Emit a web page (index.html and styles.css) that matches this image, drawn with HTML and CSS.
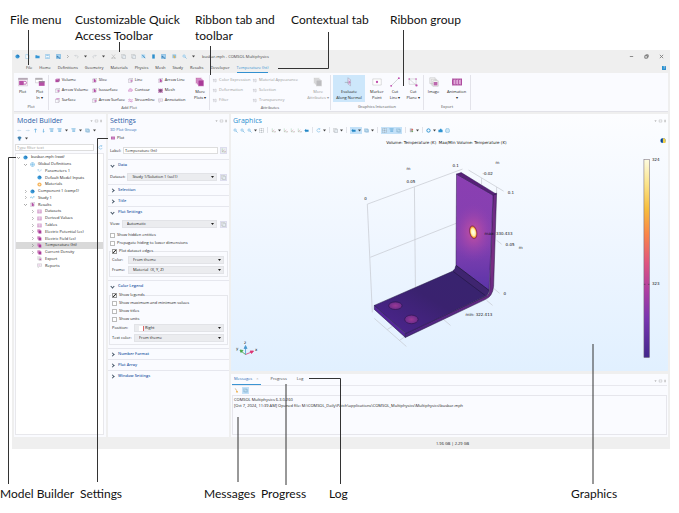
FILE: index.html
```html
<!DOCTYPE html>
<html lang="en">
<head>
<meta charset="utf-8">
<title>COMSOL Multiphysics desktop</title>
<link rel="stylesheet" href="styles.css">
</head>
<body>
<svg class="defs" aria-hidden="true">
  <defs>
    <symbol id="cube" viewBox="0 0 12 12"><path d="M1 3h7v7H1z" fill="#b0489f"/><path d="M1 3l3-2h7L8 3z" fill="#d48ac9"/><path d="M8 3l3-2v7l-3 2z" fill="#8a2f7d"/></symbol>
    <symbol id="slice" viewBox="0 0 12 12"><path d="M1 3h7v8H1zM1 3l3-2h7v8l-3 2M8 3l3-2" fill="none" stroke="#b9a9bd"/><path d="M4 3l3-1v7l-3 1zM7 5l2-1v5l-2 1z" fill="#b64fa6"/></symbol>
    <symbol id="frame" viewBox="0 0 12 12"><path d="M1 3h7v8H1zM1 3l3-2h7v8l-3 2M8 3l3-2" fill="none" stroke="#aaa2b0"/><path d="M4 7h6M8 5l2 2-2 2" fill="none" stroke="#c04fae" stroke-width="1.4"/></symbol>
    <symbol id="surf" viewBox="0 0 12 12"><path d="M1 3h7v8H1zM8 3l3-2v8l-3 2" fill="none" stroke="#aaa2b0"/><path d="M1 3l3-2h7L8 3z" fill="#c04fae"/></symbol>
    <symbol id="contour" viewBox="0 0 12 12"><path d="M2 9C0 4 4 1 7 2s5 3 2 6M5 9c-2-3 0-5 2-4s1 3 0 4" fill="none" stroke="#c04fae" stroke-width="1.3"/></symbol>
    <symbol id="mesh" viewBox="0 0 12 12"><path d="M1 2h10v9H1z" fill="#c56bb7"/><path d="M1 2l10 9M11 2L1 11M6 2v9M1 6h10" stroke="#574459" stroke-width="1"/></symbol>
    <symbol id="stream" viewBox="0 0 12 12"><path d="M1 4c3-4 5 4 10 0M1 8c3-4 5 4 10 0" fill="none" stroke="#c04fae" stroke-width="1.4"/></symbol>
    <symbol id="note" viewBox="0 0 12 12"><path d="M1 2h10v6H6l-3 3V8H1z" fill="none" stroke="#aaa2b0"/><path d="M3 5h5" stroke="#c04fae"/></symbol>
    <symbol id="fade" viewBox="0 0 12 12"><path d="M2 4h4M4 2v8M7 3h3v6H7z" fill="none" stroke="#bdbdc4" stroke-width="1.2"/></symbol>
    <symbol id="plot" viewBox="0 0 26 22"><path d="M1 1h24v20H1z" fill="#f7eef6" stroke="#b9a8b8"/><path d="M1 1h24v4H1z" fill="#ab9eac"/><path d="M3 8h12v11H3z" fill="#b64fa6"/><circle cx="18" cy="13" r="4" fill="#fff" stroke="#b64fa6" stroke-width="2"/></symbol>
    <symbol id="plotin" viewBox="0 0 26 22"><path d="M1 1h18v12H1z" fill="#fff" stroke="#a7a3a9"/><path d="M1 1h18v4H1z" fill="#aaa6ac"/><path d="M10 9h15v12H10z" fill="#b64fa6"/><path d="M10 9h15v3H10z" fill="#8e8591"/></symbol>
    <symbol id="more" viewBox="0 0 26 26"><path d="M2 2h15v15H2z" fill="#b9509f" stroke="#fff"/><path d="M5 5h15v15H5z" fill="#c05bae" stroke="#fff"/><path d="M8 8h15v16H8z" fill="#a93a98" stroke="#fff"/></symbol>
    <symbol id="moregray" viewBox="0 0 26 26"><path d="M2 2h15v15H2z" fill="#c8c8ca" stroke="#fff"/><path d="M5 5h15v15H5z" fill="#c8c8ca" stroke="#fff"/><path d="M8 8h15v16H8z" fill="#bcbcbf" stroke="#fff"/></symbol>
    <symbol id="eval" viewBox="0 0 26 26"><path d="M10 2l7 5v16l-7-5z" fill="#e6dcef" stroke="#8f8ba0"/><path d="M2 14h12" stroke="#777"/><path d="M12 10l4 4-4 3" stroke="#c04fae" fill="none" stroke-width="2"/></symbol>
    <symbol id="marker" viewBox="0 0 26 26"><path d="M2 5h22v16H2z" fill="#fff" stroke="#aaa"/><circle cx="13" cy="13" r="3" fill="#c04fae"/></symbol>
    <symbol id="cutline" viewBox="0 0 26 26"><path d="M3 23L23 3" stroke="#99959d"/><circle cx="3" cy="23" r="2.5" fill="#c04fae"/><circle cx="23" cy="3" r="2.5" fill="#c04fae"/></symbol>
    <symbol id="cutplane" viewBox="0 0 26 26"><path d="M3 5h18v14H3zM3 5l19 17" fill="none" stroke="#aaa"/><circle cx="3" cy="5" r="2" fill="#c04fae"/><circle cx="21" cy="5" r="2" fill="#c04fae"/><circle cx="22" cy="22" r="3" fill="#c04fae"/></symbol>
    <symbol id="image" viewBox="0 0 26 26"><path d="M2 2h14v15H2zM6 6h14v15H6z" fill="#f5f5f5" stroke="#aaa"/><path d="M10 10h14v14H10z" fill="#fff" stroke="#999"/><path d="M12 13h10v9H12z" fill="#bb68ad"/></symbol>
    <symbol id="film" viewBox="0 0 26 18"><path d="M0 0h26v18H0z" fill="#ad4b9e"/><path d="M4 4h5v10H4zM11 4h5v10h-5zM18 4h5v10h-5z" fill="#e0a9d9"/><path d="M1 2h24M1 16h24" stroke="#f7e5f4" stroke-dasharray="2 2"/></symbol>
    <symbol id="dot" viewBox="0 0 12 12"><circle cx="6" cy="6" r="5" fill="#3d9bd8"/><path d="M6 1v5h5" fill="#1c6aae"/></symbol>
    <symbol id="globe" viewBox="0 0 12 12"><circle cx="6" cy="6" r="5" fill="#d6edfb" stroke="#67b4e2"/><path d="M6 1v10M1 6h10" stroke="#67b4e2"/></symbol>
    <symbol id="pi" viewBox="0 0 12 12"><path d="M1 4h4M3 4v4M5 8c5 0 5-4 5-5" fill="none" stroke="#5faadc"/></symbol>
    <symbol id="mat" viewBox="0 0 12 12"><circle cx="6" cy="6" r="5" fill="#f6b45d"/><circle cx="6" cy="6" r="2" fill="#fff0cf"/></symbol>
    <symbol id="study" viewBox="0 0 12 12"><path d="M0 8l3-4 3 4 3-5 3 3" fill="none" stroke="#61b3e0" stroke-width="1.4"/></symbol>
    <symbol id="grid" viewBox="0 0 12 12"><path d="M1 2h10v8H1zM1 5h10M1 8h10M4 2v8M8 2v8" fill="none" stroke="#c57ab9"/></symbol>
    <symbol id="folder" viewBox="0 0 12 12"><path d="M1 3h4l1 1h5v6H1z" fill="#3596d6"/></symbol>
    <symbol id="doc" viewBox="0 0 12 12"><path d="M2 1h5l3 3v7H2z" fill="#fff" stroke="#67aede"/><path d="M7 1v3h3" fill="none" stroke="#67aede"/></symbol>
    <symbol id="save" viewBox="0 0 12 12"><path d="M1 1h10v10H1z" fill="#eef7fd" stroke="#60aadc"/><path d="M3 1h6v4H3zM3 8h6v3H3z" fill="#9ccbea"/></symbol>
    <symbol id="saveas" viewBox="0 0 12 12"><path d="M1 1h10v10H1z" fill="#a8d2ef" stroke="#4799d0"/><path d="M3 5l7 6M3 5v4" stroke="#206fac" stroke-width="2"/></symbol>
    <symbol id="undo" viewBox="0 0 12 12"><path d="M4 2L2 4l2 2M2 4h5c4 0 4 5 0 6" fill="none" stroke="#b4b8c0"/></symbol>
    <symbol id="redo" viewBox="0 0 12 12"><path d="M8 2l2 2-2 2M10 4H5c-4 0-4 5 0 6" fill="none" stroke="#b4b8c0"/></symbol>
    <symbol id="cut" viewBox="0 0 12 12"><path d="M2 1l7 9M10 1L3 10" stroke="#aaa"/><circle cx="3" cy="10" r="1.5" fill="none" stroke="#aaa"/><circle cx="9" cy="10" r="1.5" fill="none" stroke="#aaa"/></symbol>
    <symbol id="copy" viewBox="0 0 12 12"><path d="M1 1h7v8H1z" fill="#fff" stroke="#a6a9ad"/><path d="M4 3h7v8H4z" fill="#e6edf2" stroke="#a0a6ac"/></symbol>
    <symbol id="trash" viewBox="0 0 12 12"><path d="M3 1h6v10H3z" fill="#2d8fcd"/></symbol>
    <symbol id="pen" viewBox="0 0 12 12"><path d="M1 1h9v9H1z" fill="#b4dbf3"/><path d="M3 2l7 8" stroke="#3986bc" stroke-width="2"/></symbol>
    <symbol id="peny" viewBox="0 0 12 12"><path d="M1 1h9v9H1z" fill="#8cc4e9"/><path d="M3 2l6 5-4 4z" fill="#eab14c"/></symbol>
    <symbol id="broom" viewBox="0 0 12 12"><path d="M3 1l3 5" stroke="#b98a4a" stroke-width="1.4"/><path d="M5 6l4 1 1 4H5z" fill="#f0b659"/></symbol>
    <symbol id="zoomi" viewBox="0 0 12 12"><circle cx="5" cy="5" r="3" fill="#d4ebf9" stroke="#6ab0dc"/><path d="M7 7l4 4" stroke="#6ab0dc" stroke-width="1.6"/></symbol>
    <symbol id="extents" viewBox="0 0 12 12"><path d="M1 1h10v10H1zM6 1v10M1 6h10" fill="none" stroke="#91989e" stroke-dasharray="3 1"/></symbol>
    <symbol id="axes" viewBox="0 0 12 12"><path d="M3 1v8h8" fill="none" stroke="#8bbf94"/><path d="M3 9l5-5M9 7l2 2-2 2" fill="none" stroke="#d97e9b"/></symbol>
    <symbol id="rotate" viewBox="0 0 12 12"><path d="M9 3a4 4 0 1 0 1 4M9 0v3H6" fill="none" stroke="#67b2e0" stroke-width="1.2"/></symbol>
    <symbol id="tag" viewBox="0 0 12 12"><path d="M1 6l4-4v2h6v5H5v2z" fill="#2387c6"/></symbol>
    <symbol id="view" viewBox="0 0 12 12"><path d="M1 2h8v7H1zM4 4h7v6H4z" fill="#c9e4f4" stroke="#79aace"/></symbol>
    <symbol id="pal" viewBox="0 0 12 12"><path d="M2 1h6v9H2z" fill="#b8b6bd"/><circle cx="8" cy="4" r="2" fill="#de6459"/><circle cx="8" cy="8" r="2" fill="#6aa864"/></symbol>
    <symbol id="ring" viewBox="0 0 12 12"><circle cx="6" cy="6" r="4" fill="none" stroke="#3295d1" stroke-width="2.4"/></symbol>
    <symbol id="cam" viewBox="0 0 12 12"><path d="M1 4h3l1-2h3l1 2h2v6H1z" fill="#2e93d2"/></symbol>
    <symbol id="eye" viewBox="0 0 12 12"><path d="M1 5c0-5 10-5 10 0L8 7v4H4V7z" fill="#3c7fae"/></symbol>
    <symbol id="print" viewBox="0 0 12 12"><path d="M3 1h6v3h2v5H9v2H3V9H1V4h2z" fill="#cfe7f6" stroke="#65aeda"/></symbol>
    <symbol id="left" viewBox="0 0 12 12"><path d="M10 6H2M4 4L2 6l2 2" fill="none" stroke="#9bbfda"/></symbol>
    <symbol id="right" viewBox="0 0 12 12"><path d="M2 6h8M8 4l2 2-2 2" fill="none" stroke="#9bbfda"/></symbol>
    <symbol id="up" viewBox="0 0 12 12"><path d="M6 11V2M3 5l3-3 3 3" fill="none" stroke="#3c9bd6" stroke-width="1.3"/></symbol>
    <symbol id="down" viewBox="0 0 12 12"><path d="M6 2v8M4 8l2 2 2-2" fill="none" stroke="#3c9bd6" stroke-width="1.3"/></symbol>
    <symbol id="list" viewBox="0 0 12 12"><path d="M1 2h10M3 5h7M3 8h7" stroke="#4ba0d5" stroke-width="1.6"/></symbol>
    <symbol id="caret" viewBox="0 0 6 6"><path d="M0 1h6L3 5z" fill="#444"/></symbol>
    <symbol id="closed" viewBox="0 0 6 6"><path d="M2 0l3 3-3 3" fill="none" stroke="#777"/></symbol>
    <symbol id="open" viewBox="0 0 6 6"><path d="M0 2l3 3 3-3" fill="none" stroke="#555"/></symbol>
    <symbol id="panelctl" viewBox="0 0 30 8"><path d="M1 3h5L3.500 6z" fill="#999"/><path d="M12 1.500h6v5h-6z" fill="none" stroke="#aaa"/><path d="M24 1h3v6h-3z" fill="#bbb"/></symbol>
  </defs>
</svg>

<div class="figure">
  <div class="labels top">
    <span>File menu</span><span>Customizable Quick<br>Access Toolbar</span><span>Ribbon tab and<br>toolbar</span><span>Contextual tab</span><span>Ribbon group</span>
  </div>

  <div class="window">
    <header class="titlebar">
      <div class="quick">
        <svg><use href="#dot"/></svg><svg><use href="#doc"/></svg><svg><use href="#folder"/></svg><svg><use href="#save"/></svg><svg><use href="#saveas"/></svg><svg class="tiny"><use href="#closed"/></svg><svg><use href="#undo"/></svg><svg class="tiny"><use href="#caret"/></svg><svg><use href="#redo"/></svg><svg class="tiny"><use href="#caret"/></svg><svg><use href="#cut"/></svg><svg><use href="#copy"/></svg><svg><use href="#copy"/></svg><svg><use href="#pen"/></svg><svg><use href="#trash"/></svg><svg><use href="#saveas"/></svg><svg><use href="#peny"/></svg><svg><use href="#zoomi"/></svg><svg class="tiny"><use href="#caret"/></svg>
      </div>
      <span class="title">busbar.mph - COMSOL Multiphysics</span>
      <div class="winctl">
        <svg viewBox="0 0 6 6"><path d="M1 3h4" stroke="#777"/></svg>
        <svg viewBox="0 0 6 6"><path d="M1 2h3v3H1zM2 1h3v3" fill="none" stroke="#666" stroke-width="1"/></svg>
        <svg viewBox="0 0 6 6"><path d="M1 1l4 4M5 1L1 5" stroke="#777"/></svg>
      </div>
    </header>

    <nav class="tabs">
      <a href="#">File</a><a href="#">Home</a><a href="#">Definitions</a><a href="#">Geometry</a><a href="#">Materials</a><a href="#">Physics</a><a href="#">Mesh</a><a href="#">Study</a><a href="#">Results</a><a href="#">Developer</a><a href="#" class="active">Temperature (ht)</a>
      <span class="help">?</span>
    </nav>

    <div class="ribbon">
      <section class="group g-plot">
        <div class="tools">
          <button class="big"><svg><use href="#plot"/></svg>Plot</button>
          <button class="big"><svg><use href="#plotin"/></svg>Plot<br>In ▾</button>
        </div>
        <h3>Plot</h3>
      </section>
      <section class="group g-add">
        <div class="tools">
          <div class="small add">
            <button><svg><use href="#cube"/></svg>Volume</button><button><svg><use href="#slice"/></svg>Slice</button><button><svg><use href="#frame"/></svg>Line</button><button><svg><use href="#slice"/></svg>Arrow Line</button>
            <button><svg><use href="#frame"/></svg>Arrow Volume</button><button><svg><use href="#slice"/></svg>Isosurface</button><button><svg><use href="#contour"/></svg>Contour</button><button><svg><use href="#mesh"/></svg>Mesh</button>
            <button><svg><use href="#surf"/></svg>Surface</button><button><svg><use href="#frame"/></svg>Arrow Surface</button><button><svg><use href="#stream"/></svg>Streamline</button><button><svg><use href="#note"/></svg>Annotation</button>
          </div>
          <button class="big"><svg><use href="#more"/></svg>More<br>Plots ▾</button>
        </div>
        <h3>Add Plot</h3>
      </section>
      <section class="group g-attr">
        <div class="tools">
          <div class="small attr">
            <button disabled><svg><use href="#fade"/></svg>Color Expression</button><button disabled><svg><use href="#fade"/></svg>Material Appearance</button>
            <button disabled><svg><use href="#fade"/></svg>Deformation</button><button disabled><svg><use href="#fade"/></svg>Selection</button>
            <button disabled><svg><use href="#fade"/></svg>Filter</button><button disabled><svg><use href="#fade"/></svg>Transparency</button>
          </div>
          <button class="big" disabled><svg><use href="#moregray"/></svg>More<br>Attributes ▾</button>
        </div>
        <h3>Attributes</h3>
      </section>
      <section class="group g-inter">
        <div class="tools">
          <button class="big on"><svg><use href="#eval"/></svg>Evaluate<br>Along Normal</button>
          <button class="big"><svg><use href="#marker"/></svg>Marker<br>Point</button>
          <button class="big"><svg><use href="#cutline"/></svg>Cut<br>Line ▾</button>
          <button class="big"><svg><use href="#cutplane"/></svg>Cut<br>Plane ▾</button>
        </div>
        <h3>Graphics Interaction</h3>
      </section>
      <section class="group g-exp">
        <div class="tools">
          <button class="big"><svg><use href="#image"/></svg>Image</button>
          <button class="big"><svg><use href="#film"/></svg>Animation<br>▾</button>
        </div>
        <h3>Export</h3>
      </section>
    </div>

    <main class="desk">
      <aside class="panel builder">
        <div class="head"><h2>Model Builder</h2><svg class="ctl"><use href="#panelctl"/></svg></div>
        <div class="bar">
          <svg><use href="#left"/></svg><svg><use href="#right"/></svg><svg><use href="#up"/></svg><svg><use href="#down"/></svg><svg><use href="#list"/></svg><svg><use href="#list"/></svg><svg class="tiny"><use href="#caret"/></svg><svg><use href="#list"/></svg><svg class="tiny"><use href="#caret"/></svg><svg><use href="#view"/></svg><svg class="tiny"><use href="#caret"/></svg>
        </div>
        <div class="bar"><svg><use href="#eye"/></svg><svg class="tiny"><use href="#caret"/></svg></div>
        <div class="filter"><input type="text" placeholder="Type filter text" aria-label="Filter"><svg><use href="#rotate"/></svg></div>
        <div class="treebox">
          <ul class="tree">
            <li><svg class="tw"><use href="#open"/></svg><svg><use href="#dot"/></svg><span>busbar.mph <i>(root)</i></span></li>
            <li class="l1"><svg class="tw"><use href="#open"/></svg><svg><use href="#globe"/></svg>Global Definitions</li>
            <li class="l2"><b></b><svg><use href="#pi"/></svg>Parameters 1</li>
            <li class="l2"><b></b><svg><use href="#dot"/></svg>Default Model Inputs</li>
            <li class="l2"><b></b><svg><use href="#mat"/></svg>Materials</li>
            <li class="l1"><svg class="tw"><use href="#closed"/></svg><svg><use href="#dot"/></svg><span>Component 1 <i>(comp1)</i></span></li>
            <li class="l1"><svg class="tw"><use href="#closed"/></svg><svg><use href="#study"/></svg>Study 1</li>
            <li class="l1"><svg class="tw"><use href="#open"/></svg><svg><use href="#slice"/></svg>Results</li>
            <li class="l2"><svg class="tw"><use href="#closed"/></svg><svg><use href="#grid"/></svg>Datasets</li>
            <li class="l2"><svg class="tw"><use href="#closed"/></svg><svg><use href="#grid"/></svg>Derived Values</li>
            <li class="l2"><svg class="tw"><use href="#closed"/></svg><svg><use href="#grid"/></svg>Tables</li>
            <li class="l2"><svg class="tw"><use href="#closed"/></svg><svg><use href="#more"/></svg>Electric Potential (ec)</li>
            <li class="l2"><svg class="tw"><use href="#closed"/></svg><svg><use href="#more"/></svg>Electric Field (ec)</li>
            <li class="l2 sel"><svg class="tw"><use href="#closed"/></svg><svg><use href="#more"/></svg>Temperature (ht)</li>
            <li class="l2"><svg class="tw"><use href="#closed"/></svg><svg><use href="#more"/></svg>Current Density</li>
            <li class="l2"><b></b><svg><use href="#image"/></svg>Export</li>
            <li class="l2"><b></b><svg><use href="#note"/></svg>Reports</li>
          </ul>
        </div>
      </aside>

      <section class="panel settings">
        <div class="head"><h2>Settings</h2><svg class="ctl"><use href="#panelctl"/></svg></div>
        <p class="sub">3D Plot Group</p>
        <button class="plotbtn"><svg><use href="#film"/></svg>Plot</button>
        <div class="field first"><label for="lab">Label:</label><input id="lab" type="text" value="Temperature (ht)"><button class="sq" aria-label="Go to plot"><svg><use href="#axes"/></svg></button></div>
        <section class="sec">
          <h3 class="o">Data</h3>
          <div class="field mid"><label for="ds">Dataset:</label><span class="sl"><select id="ds"><option>Study 1/Solution 1 (sol1)</option></select></span><button class="sq" aria-label="Go to source"><svg><use href="#copy"/></svg></button></div>
        </section>
        <section class="sec"><h3>Selection</h3></section>
        <section class="sec"><h3>Title</h3></section>
        <section class="sec">
          <h3 class="o">Plot Settings</h3>
          <div class="field mid"><label for="vw">View:</label><span class="sl"><select id="vw"><option>Automatic</option></select></span><button class="sq" aria-label="Go to view"><svg><use href="#copy"/></svg></button></div>
          <label class="ck"><input type="checkbox">Show hidden entities</label>
          <label class="ck"><input type="checkbox">Propagate hiding to lower dimensions</label>
          <fieldset>
            <legend><label class="ck"><input type="checkbox" checked>Plot dataset edges</label></legend>
            <div class="field in"><label for="co">Color:</label><span class="sl"><select id="co"><option>From theme</option></select></span></div>
            <div class="field in"><label for="fr">Frame:</label><span class="sl"><select id="fr"><option>Material &nbsp;(X, Y, Z)</option></select></span></div>
          </fieldset>
        </section>
        <section class="sec">
          <h3 class="o">Color Legend</h3>
          <fieldset>
            <legend><label class="ck"><input type="checkbox" checked>Show legends</label></legend>
            <label class="ck"><input type="checkbox">Show maximum and minimum values</label>
            <label class="ck"><input type="checkbox">Show titles</label>
            <label class="ck"><input type="checkbox">Show units</label>
            <div class="field in wide"><label for="po">Position:</label><span class="sl swatch"><select id="po"><option>Right</option></select></span></div>
            <div class="field in wide"><label for="tc">Text color:</label><span class="sl"><select id="tc"><option>From theme</option></select></span></div>
          </fieldset>
        </section>
        <section class="sec"><h3>Number Format</h3></section>
        <section class="sec"><h3>Plot Array</h3></section>
        <section class="sec"><h3>Window Settings</h3></section>
      </section>

      <div class="right">
        <section class="panel graphics">
          <div class="head"><h2>Graphics</h2><svg class="ctl"><use href="#panelctl"/></svg></div>
          <div class="bar gbar">
            <svg><use href="#zoomi"/></svg><svg><use href="#zoomi"/></svg><svg><use href="#zoomi"/></svg><svg class="tiny"><use href="#caret"/></svg><svg><use href="#extents"/></svg><i></i><svg><use href="#axes"/></svg><svg class="tiny"><use href="#caret"/></svg><svg><use href="#axes"/></svg><svg><use href="#axes"/></svg><svg><use href="#axes"/></svg><svg><use href="#tag"/></svg><i></i><svg><use href="#rotate"/></svg><svg class="tiny"><use href="#caret"/></svg><i></i><svg><use href="#copy"/></svg><svg class="tiny"><use href="#caret"/></svg><i></i><span class="hot"><svg><use href="#tag"/></svg><svg class="tiny"><use href="#caret"/></svg></span><svg><use href="#view"/></svg><svg class="tiny"><use href="#caret"/></svg><i></i><span class="hot"><svg><use href="#extents"/></svg><svg><use href="#list"/></svg><svg><use href="#view"/></svg></span><i></i><svg><use href="#pal"/></svg><svg class="tiny"><use href="#caret"/></svg><i></i><svg><use href="#ring"/></svg><svg class="tiny"><use href="#caret"/></svg><svg><use href="#cam"/></svg><svg><use href="#print"/></svg>
          </div>
          <svg class="scene" viewBox="232 134 436 236">
            <defs>
              <linearGradient id="cb" x1="0" y1="0" x2="0" y2="1"><stop offset="0" stop-color="#fdfbe0"/><stop offset=".12" stop-color="#fbe48c"/><stop offset=".25" stop-color="#f7bd3c"/><stop offset=".38" stop-color="#fa8449"/><stop offset=".52" stop-color="#e0557f"/><stop offset=".65" stop-color="#b23fa0"/><stop offset=".8" stop-color="#7a35b0"/><stop offset="1" stop-color="#42278c"/></linearGradient>
              <linearGradient id="face" x1="0" y1="0" x2="0" y2="1"><stop offset="0" stop-color="#8b3fb2"/><stop offset=".6" stop-color="#8340b0"/><stop offset="1" stop-color="#5a34a8"/></linearGradient>
              <linearGradient id="base" x1="0" y1="1" x2="1" y2="0"><stop offset="0" stop-color="#4f2593"/><stop offset=".5" stop-color="#3a226f"/><stop offset="1" stop-color="#38246f"/></linearGradient>
              <linearGradient id="side" x1="0" y1="0" x2="0" y2="1"><stop offset="0" stop-color="#6a2b86"/><stop offset=".5" stop-color="#7a2e83"/><stop offset="1" stop-color="#472480"/></linearGradient>
              <radialGradient id="glow"><stop offset="0" stop-color="#c9509f"/><stop offset=".5" stop-color="#ac48aa" stop-opacity=".5"/><stop offset="1" stop-color="#8b3fb2" stop-opacity="0"/></radialGradient>
              <radialGradient id="hotspot"><stop offset="0" stop-color="#fffff0"/><stop offset=".55" stop-color="#fff3b0"/><stop offset=".8" stop-color="#f7a13a"/><stop offset="1" stop-color="#a83b3b"/></radialGradient>
              <radialGradient id="hole"><stop offset="0" stop-color="#9a3a94"/><stop offset="1" stop-color="#6c2b8c"/></radialGradient>
              <clipPath id="plate"><path d="M457 174l36.500 21-4 95-33-25z"/></clipPath>
            </defs>
            <g class="wire">
              <path d="M368 204L463 169M368 204l5 108M415 187l1 100M371 257l86-34M469 170l35 21M482 178v6M497 187v7M497 240l5 4M494 288l6 5M487 300l6 5M444 319l7 6M375 318l32 28M388 329l5-3M400 340l6-4"/>
            </g>
            <path d="M375 305l31 28v4l-31-28z" fill="#55269a" stroke="#1f1540" stroke-width=".5"/>
            <path d="M406 333l80-37q4-2 4-6l3.500-96 3.500-1-3 93q-1 10-8 13l-80 38z" fill="url(#side)" stroke="#251443" stroke-width=".5"/>
            <path d="M375 305l78-34q3-2 3.500-6l33 25q-1 5-4 6l-79 37z" fill="url(#base)" stroke="#1f1540" stroke-width=".5"/>
            <path d="M457 174l36.500 21-4 95-33-25z" fill="url(#face)" stroke="#2c1650" stroke-width=".5"/>
            <ellipse cx="474" cy="232" rx="22" ry="30" fill="url(#glow)" clip-path="url(#plate)"/>
            <path d="M457 174l4.700-1.500 35 21.500-3.200 1z" fill="#572078" stroke="#2c1650" stroke-width=".5"/>
            <path d="M456.500 265l33 25q-1 5-4 5l-32-24q3-2 3-6z" fill="#3f2570"/>
            <path d="M456.500 265l33 25M453.500 271l32 24" stroke="#1b1235" stroke-width=".5" fill="none"/>
            <ellipse cx="396" cy="305.300" rx="6.700" ry="3.800" fill="url(#hole)" stroke="#2c1650" stroke-width=".7"/>
            <ellipse cx="412" cy="319" rx="6.700" ry="4.300" fill="url(#hole)" stroke="#2c1650" stroke-width=".7"/>
            <ellipse cx="473.700" cy="232" rx="3.600" ry="6.500" transform="rotate(-12 473.700 232)" fill="url(#hotspot)" stroke="#6b2450" stroke-width=".5"/>
            <g class="gl">
              <text x="387" y="144">Volume: Temperature (K)&#160; Max/Min Volume: Temperature (K)</text>
              <text x="365" y="200">0</text><text x="407" y="183">0.05</text><text x="407" y="170">m</text><text x="453" y="167">0.1</text>
              <text x="496" y="164">m</text><text x="483" y="175">-0.02</text><text x="508" y="194">0.1</text><text x="485" y="235">max: 330.433</text><text x="506" y="246">0.05</text><text x="519" y="249">m</text><text x="504" y="295">0</text><text x="466" y="316">min: 322.413</text>
              <text x="652" y="161">324</text><text x="652" y="285">323</text>
              <text x="245" y="344">z</text><text x="256" y="351">x</text><text x="237" y="350">y</text>
            </g>
            <rect x="644" y="159.500" width="5.500" height="197.500" fill="url(#cb)" stroke="#6d6272" stroke-width=".5"/>
            <path d="M644 284h1.500M648 284h1.500" stroke="#333" stroke-width=".5"/>
            <path d="M246.500 354v-7M245 348l1.500-3 1.500 3z" stroke="#4a9ad0" fill="#4a9ad0" stroke-width=".8"/>
            <path d="M246.500 354l6-2.500M251 350.500l3.500 0-2 2.500z" stroke="#dd3373" fill="#dd3373" stroke-width=".8"/>
            <path d="M246.500 354l-4-3M241 349.500l3 .5-2 2z" stroke="#41a541" fill="#41a541" stroke-width=".8"/>
            <circle cx="663" cy="140.500" r="2.600" fill="#2f6fc0"/><path d="M663 138v5h2.500v-4z" fill="#f0cf4a"/><path d="M661 139h1.500v3H661z" fill="#14427f"/>
          </svg>
        </section>
        <section class="panel messages">
          <div class="mtabs">
            <button class="cur">Messages <span>×</span></button><button>Progress</button><button>Log</button><svg class="ctl"><use href="#panelctl"/></svg>
          </div>
          <div class="bar mbar"><svg><use href="#broom"/></svg><span class="hot"><svg><use href="#view"/></svg></span></div>
          <div class="log">COMSOL Multiphysics 6.3.0.260<br>[Oct 7, 2024, 11:39 AM] Opened file: M:\COMSOL_Daily\Patch\applications\COMSOL_Multiphysics\Multiphysics\busbar.mph</div>
        </section>
      </div>
    </main>
    <footer class="status">1.96 GB | 2.29 GB</footer>
  </div>

  <div class="labels bottom">
    <span>Model Builder</span><span>Settings</span><span>Messages</span><span>Progress</span><span>Log</span><span>Graphics</span>
  </div>

  <svg class="leaders" width="679" height="513" viewBox="0 0 679 513" aria-hidden="true">
    <path d="M28.500 30v35M119.500 42v10M210.500 46v29M328.500 32v36.500H278M403.500 30v56M16 157.500H8.500V484M108 138.500H97.500V482M238 417v65M286 384v101M309 378.500h31.500V484M593 344v140"/>
  </svg>
</div>
</body>
</html>
```
FILE: styles.css
```css
* { box-sizing: border-box; }
body { margin: 0; background: #fff; font: 4px/6px "Open Sans", "Noto Sans", sans-serif; color: #222; }
h2, h3, p, ul { margin: 0; padding: 0; font-weight: normal; }
h3 { font-size: 4px; }
button, input, select { font: inherit; color: inherit; margin: 0; padding: 0; border: 0; background: none; border-radius: 0; }
svg { display: block; flex: none; }
.defs { position: absolute; width: 0; height: 0; }
.figure { position: relative; }

/* callouts */
.labels { display: grid; font: 12px/16px Lato, sans-serif; color: #111; white-space: nowrap; }
.top { grid-template-columns: 65px 120px 96px 99px 1fr; padding: 12px 0 6px 10px; }
.bottom { grid-template-columns: 80px 124px 57px 68px 242px 1fr; padding-top: 37px; }
.leaders { position: absolute; top: 0; left: 0; pointer-events: none; }
.leaders path { fill: none; stroke: #333; stroke-width: 1; }

/* window */
.window { margin: 0 9px 0 12px; padding: 0 2px; background: #efefef; }
.titlebar { display: flex; align-items: center; height: 13px; padding: 0 4px 0 1px; }
.quick { display: flex; align-items: center; justify-content: space-between; width: 180px; }
.quick svg { width: 5px; height: 5px; }
svg.tiny { width: 3px; height: 3px; }
.title { margin-left: 7px; flex: 1; color: #444; }
.winctl { display: flex; gap: 10px; }
.winctl svg { width: 5px; height: 5px; }
.tabs { display: flex; align-items: center; gap: 7px; height: 10px; padding: 0 2px 0 12px; }
.tabs a { color: #333; text-decoration: none; line-height: 9px; border-bottom: 1px solid transparent; white-space: nowrap; }
.tabs .active { color: #3290d0; border-color: #3290d0; }
.help { margin-left: auto; width: 4px; height: 4px; line-height: 4px; text-align: center; background: #2d8fce; color: #fff; }

.ribbon { display: flex; height: 39px; padding-top: 2px; background: #fafbff; border-bottom: 1px solid #e2e2e8; }
.group { display: flex; flex-direction: column; justify-content: space-between; border-right: 1px solid #e3e3ea; margin-bottom: 1px; }
.group h3 { text-align: center; line-height: 6px; color: #555; }
.tools { display: flex; justify-content: space-around; }
.g-plot { width: 35px; }
.g-add { width: 161px; }
.g-attr { width: 121px; }
.g-inter { width: 93px; }
.g-exp { width: 47px; }
.small { display: grid; grid-auto-rows: 10px; flex: none; }
.add { grid-template-columns: 37px 36px 30px 32px; padding-left: 4px; }
.attr { grid-template-columns: 40px 54px; padding-left: 2px; }
.small button { display: flex; align-items: center; gap: 2px; white-space: nowrap; }
.small svg { width: 5px; height: 5px; }
.big { display: flex; flex-direction: column; align-items: center; gap: 2px; padding: 2px 1px 0; height: 27px; white-space: nowrap; }
.big svg { width: 10px; height: 10px; }
.on { width: 32px; background: #cde7fb; }
button:disabled { color: #999; }

.desk { display: grid; grid-template-columns: 92px 121px 1fr; gap: 2px; padding-top: 2px; }
.panel { background: #fafbff; min-width: 0; }
.head { display: flex; justify-content: space-between; height: 12px; padding: 0 1px 0 2px; }
.head h2 { font-size: 7px; line-height: 14px; color: #2d5da6; }
.ctl { width: 13px; height: 4px; margin-top: 5px; }
.bar { display: flex; align-items: center; gap: 3px; height: 8px; padding: 0 2px; }
.bar svg { width: 5px; height: 5px; }
.bar svg.tiny { width: 3px; height: 3px; }

.builder { display: flex; flex-direction: column; padding: 0 2px 2px 1px; }
.filter { display: flex; justify-content: space-between; align-items: center; padding: 2px 1px 2px 0; }
.filter input { width: 79px; height: 7px; padding: 0 1px; border: 1px solid #ddd; background: #fff; line-height: 5px; }
.filter input::placeholder { color: #999; }
.filter svg { width: 5px; height: 5px; }
.treebox { flex: 1; border: 1px solid #e8e8ec; background: #fff; }
.tree { display: grid; grid-auto-rows: 1fr; height: 115px; list-style: none; }
.tree li { display: flex; align-items: center; gap: 3px; padding-left: 1px; white-space: nowrap; }
.tree svg { width: 5px; height: 5px; }
.tree .tw, .tree b { width: 3px; height: 3px; }
.tree .l1 { padding-left: 8px; }
.tree .l2 { padding-left: 15px; }
.tree .sel { background: #d9d9d9; }

.sub { padding-left: 2px; line-height: 8px; color: #2d6cb4; }
.plotbtn { display: flex; align-items: center; gap: 2px; height: 8px; padding-left: 3px; }
.plotbtn svg { width: 4px; height: 4px; }
.field { display: flex; align-items: center; gap: 2px; padding: 0 2px; }
.field > label { flex: none; }
.field input { flex: 1; min-width: 0; height: 7px; border: 1px solid #ddd; background: #fff; padding: 0 1px; }
.first { height: 17px; }
.mid { height: 14px; }
.in { height: 10px; padding: 0 1px; }
.in > label { width: 14px; }
.wide > label { width: 20px; }
.sl { position: relative; display: flex; flex: 1; margin-right: 1px; }
.sl::after { content: ""; position: absolute; right: 3px; top: 3px; width: 3px; height: 2px; background: #222; clip-path: polygon(0 0, 100% 0, 50% 100%); pointer-events: none; }
.sl select { appearance: none; flex: 1; height: 8px; padding: 0 4px; background: #ebecef; border: 1px solid #e2e3e7; line-height: 6px; }
.swatch select { padding-left: 10px; }
.swatch::before { content: ""; position: absolute; left: 5px; top: 2px; width: 4px; height: 5px; background: #fff; border-right: 1px solid #d66; pointer-events: none; }
.sq { width: 7px; height: 7px; background: #e9edf0; border: 1px solid #dde; }
.sq svg { width: 5px; height: 5px; }
.sec { border-top: 1px solid #e6e7ee; }
.sec h3 { display: flex; align-items: center; gap: 4px; height: 10px; padding-left: 3px; font-weight: 600; color: #2d5da6; }
.sec h3::before { content: ""; width: 2px; height: 2px; border-top: 1px solid #456; border-right: 1px solid #456; transform: rotate(45deg); }
.sec h3.o::before { transform: rotate(135deg); }
.ck { display: flex; align-items: center; gap: 2px; height: 8px; padding-left: 2px; }
.ck input { appearance: none; width: 5px; height: 5px; border: 1px solid #bbb; background: #fff; }
.ck input:checked { background: linear-gradient(135deg, #fff 30%, #333 50%, #fff 70%); border-color: #999; }
fieldset { min-width: 0; margin: 0 1px 3px; padding: 0 1px 1px; border: 1px solid #e6e7ec; }
legend { padding: 0; }
fieldset .ck { padding-left: 1px; }

.right { display: flex; flex-direction: column; gap: 3px; min-width: 0; }
.graphics { background: linear-gradient(#fcfdff, #eff6ff 50%, #e1f0ff); }
.graphics h2 { color: #2b8fd0; }
.gbar { gap: 2px; }
.gbar i { width: 1px; height: 6px; margin: 0 1px; background: #e0e2e8; }
.hot { display: flex; align-items: center; gap: 2px; height: 7px; padding: 0 1px; background: #c3e1f8; }
.scene { width: 100%; height: auto; }
.wire { fill: none; stroke: #c5c8d0; stroke-width: .7; }
.gl { font: 4px "DejaVu Sans", sans-serif; fill: #111; }
.messages { flex: 1; display: flex; flex-direction: column; padding: 0 1px 2px; }
.mtabs { display: flex; gap: 10px; height: 12px; border-bottom: 1px solid #e8e8ee; }
.mtabs button { padding: 0; color: #444; }
.mtabs .cur { padding: 0 2px; color: #2d6cb4; border-bottom: 1px solid #3a94d3; }
.mtabs span { margin-left: 3px; color: #aaa; }
.mtabs .ctl { margin-left: auto; }
.mbar { height: 9px; }
.log { flex: 1; min-height: 40px; padding: 1px; border: 1px solid #e6e6ec; overflow-wrap: anywhere; }
.status { height: 12px; padding-left: 422px; line-height: 13px; }
```
